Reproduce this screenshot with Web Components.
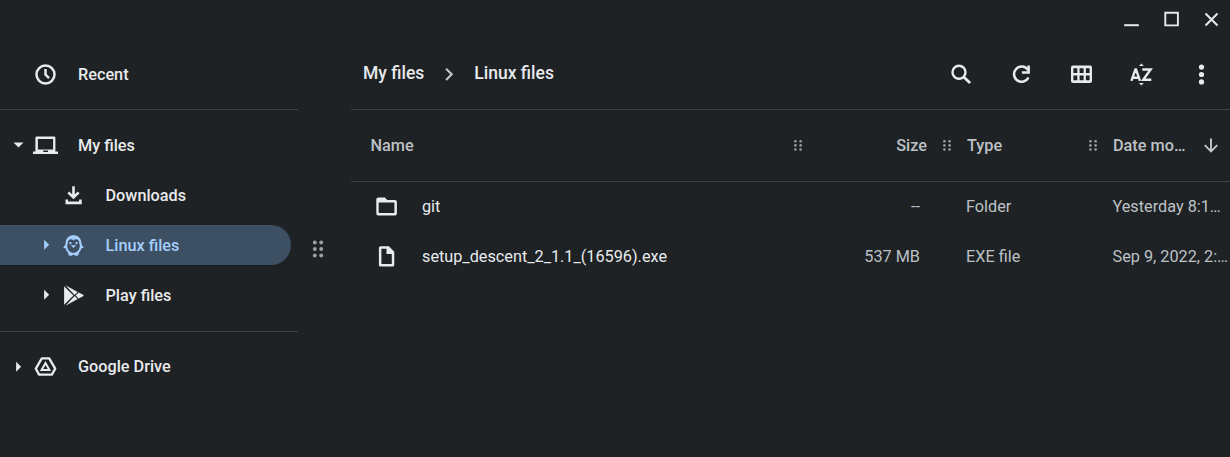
<!DOCTYPE html>
<html lang="en">
<head>
<meta charset="utf-8">
<title>Files</title>
<style>
html,body{margin:0;height:100%;background:#1e2224;overflow:hidden}
</style>
</head>
<body>
<files-app></files-app>
<script>
const define=(name,html,setup)=>customElements.define(name,class extends HTMLElement{
  connectedCallback(){
    if(this.shadowRoot)return;
    const root=this.attachShadow({mode:'open'});
    const t=document.createElement('template');
    t.innerHTML=html;
    root.append(t.content.cloneNode(true));
    if(setup)setup(this,root);
  }
});

/* All glyphs live on a 26 x 26 grid */
const ICONS={
clock:'<circle cx="13" cy="13" r="9" fill="none" stroke="currentColor" stroke-width="2.500"/><path d="M13 7.600v5.500l3.500 3.500" fill="none" stroke="currentColor" stroke-width="2.500"/>',
laptop:'<path fill-rule="evenodd" d="M4.3 4h17.4c.7 0 1.2.5 1.2 1.2V19H25.500v2.600H.5V19H2.900V5.200C2.900 4.500 3.500 4 4.300 4zM5.400 6.400V17h15.200V6.400zM10.700 18.100v1.300h4.800v-1.300z"/>',
download:'<path d="M13 3.800v10.200M7.800 9.800l5.200 5.200 5.200-5.200M6.300 17v3.400h13.600V17" fill="none" stroke="currentColor" stroke-width="2.600"/>',
penguin:'<path fill-rule="evenodd" d="M13 2.800c4.200 0 7.200 2.600 7.700 6.500l.5 2.900 2 2.900c-.5.700-1.300.9-2.200.5-.5 2.100-1.500 3.600-2.800 4.900.5 1.800-.5 2.800-2.500 2.800-1.100 0-1.700-.4-2.100-1.100h-1.200c-.4.700-1 1.100-2.100 1.100-2 0-3-1-2.500-2.800-1.300-1.300-2.300-2.800-2.800-4.900-.9.400-1.700.2-2.200-.5l2-2.900.5-2.900C5.800 5.400 8.800 2.800 13 2.800zM13 8.200c-1.300-2-5.200-2.100-5.600 1.500-.1 1-.7 2-.7 3.300 0 4.300 2.600 7.300 6.300 7.300s6.300-3 6.300-7.300c0-1.300-.6-2.300-.7-3.300C18.200 6.100 14.300 6.200 13 8.200z"/><circle cx="9.900" cy="10.600" r="1.200"/><circle cx="16.100" cy="10.600" r="1.200"/><path d="M10.300 12.800h5.400L13 15.600z"/>',
play:'<path d="M3.600 3.800L13 13 3.600 22.200zM5 2.700l12.200 6.800-3.100 3zM5 23.300l12.200-6.800-3.100-3zM18.200 10l4.400 2.300q1.200.7 0 1.400L18.200 16 15.100 13z"/>',
drive:'<path d="M9.300 4.800h7.400l6 10.200-3.300 6H6.600L3.300 15z" fill="none" stroke="currentColor" stroke-width="2.300" stroke-linejoin="round"/><path d="M13 9.500l3.900 6.800H9.100z" fill="none" stroke="currentColor" stroke-width="2"/>',
down:'<path d="M8 10.500h10L13 15.500z"/>',
right:'<path d="M10.800 8v10l5-5z"/>',
chevron:'<path d="M9.600 7.200l5.600 5.600-5.600 5.600" fill="none" stroke="currentColor" stroke-width="2.100"/>',
search:'<circle cx="10.500" cy="11" r="6.500" fill="none" stroke="currentColor" stroke-width="2.400"/><path d="M15.200 15.600l6.400 6.200" stroke="currentColor" stroke-width="2.800"/>',
refresh:'<path d="M19.300 8.200A7.600 7.600 0 1 0 20 16" fill="none" stroke="currentColor" stroke-width="2.500"/><path d="M18.800 4.100h2.600v8.200h-8V9.800h5.400z"/>',
grid:'<path fill-rule="evenodd" d="M4.500 4h17q2 0 2 2v13.500q0 2-2 2h-17q-2 0-2-2V6q0-2 2-2zM4.900 6.700v4.800h3.900V6.700zm6.200 0v4.800h4V6.700zm6.300 0v4.800h3.700V6.700zM4.900 13.900v4.900h3.900v-4.900zm6.200 0v4.900h4v-4.900zm6.300 0v4.900h3.700v-4.900z"/>',
sort:'<path d="M10.500 4.400h4.800L12.900 2zM10.500 21.600h4.800l-2.400 2.400z"/><path d="M2.900 19.300L6.900 7.900h.6l4 11.400M4.700 16.300h5.200M13.800 8h8.300l-7.400 10.200h8.100" fill="none" stroke="currentColor" stroke-width="2.400"/>',
more:'<circle cx="13" cy="5.600" r="2.600"/><circle cx="13" cy="13" r="2.600"/><circle cx="13" cy="20.400" r="2.600"/>',
folder:'<path fill-rule="evenodd" d="M4.700 4h6.600l2.500 2.600h7.700q1.900 0 1.900 1.900v11.600q0 1.900-1.900 1.900H4.700q-1.900 0-1.900-1.900V5.900Q2.800 4 4.700 4zM5.200 9.100v10.500h15.700V9.100z"/>',
file:'<path fill-rule="evenodd" d="M7 3h8.400l5.400 5.500v13.200q0 1.600-1.600 1.600H7q-1.600 0-1.600-1.600V4.600Q5.400 3 7 3zM7.900 5.500V20.800h10.400V10.700h-5.300V5.500z"/>',
arrow:'<path d="M13 6v12.600M6.800 12.700l6.200 6.200 6.200-6.200" fill="none" stroke="currentColor" stroke-width="1.900"/>',
min:'<path d="M5.700 18.200h14.600v2H5.700z"/>',
max:'<path d="M6.800 6.800h12.600v12.600H6.800z" fill="none" stroke="currentColor" stroke-width="1.900"/>',
close:'<path d="M7 7l12 12M19 7L7 19" stroke="currentColor" stroke-width="2"/>',
grip:[8.900,13,17.100].map(y=>`<circle cx="10.400" cy="${y}" r="1.300"/><circle cx="15.600" cy="${y}" r="1.300"/>`).join(''),
handle:[6.500,13,19.500].map(y=>`<circle cx="9.800" cy="${y}" r="1.950"/><circle cx="16.200" cy="${y}" r="1.950"/>`).join('')
};
define('ui-icon','<style>:host{display:block;flex:none;width:26px;height:26px}svg{display:block;overflow:visible}</style><svg width="26" height="26" viewBox="0 0 26 26" fill="currentColor"></svg>',
 (el,root)=>{
  const svg=root.querySelector('svg');
  svg.innerHTML=ICONS[el.getAttribute('name')]||'';
  /* optional sub-pixel optical alignment: "dx dy" */
  const [dx,dy]=(el.getAttribute('nudge')||'0 0').split(' ').map(Number);
  svg.setAttribute('viewBox',`${-dx} ${-dy} 26 26`);
 });

define('nav-item',`<style>
:host{display:block;height:50px;padding:5px 0;box-sizing:border-box;color:#e8eaed}
.row{display:flex;align-items:center;height:40px;width:291px;box-sizing:border-box;padding-left:5px;border-radius:0 20px 20px 0;font-weight:500}
:host([nested]) .row{padding-left:33px}
:host([selected]) .row{background:#3c4f63;color:#a4cefb}
.label{margin-left:20px;padding-top:var(--label-drop,2px);white-space:nowrap}
:host([nested]) .label{margin-left:19.500px}
</style><div class="row"><slot name="twisty"></slot><slot name="icon"></slot><span class="label"><slot></slot></span></div>`,
 (el)=>{
  const add=(slot,name,nudge)=>{
    const i=document.createElement('ui-icon');
    i.slot=slot;i.setAttribute('name',name);i.setAttribute('nudge',nudge);
    if(slot==='icon')i.style.marginLeft='1px';
    el.append(i);
  };
  add('twisty',el.getAttribute('twisty')||'none',el.getAttribute('twisty')==='right'?'0.3 -0.3':'0.5 0');
  add('icon',el.getAttribute('icon'),el.getAttribute('nudge')||'0.5 0.5');
 });

define('nav-group',`<style>:host{display:block;padding:10px 0 11px;border-top:1px solid #3f4245}</style><slot></slot>`);

define('file-nav',`<style>
:host{display:block;width:298px;flex:none;padding-top:49px;box-sizing:border-box}
.first{padding-bottom:10px}
.last{--label-drop:0px}
</style>
<div class="first"><nav-item icon="clock">Recent</nav-item></div>
<nav-group><nav-item icon="laptop" twisty="down">My files</nav-item>
<nav-item nested icon="download">Downloads</nav-item>
<nav-item nested selected icon="penguin" twisty="right">Linux files</nav-item>
<nav-item nested icon="play" twisty="right">Play files</nav-item></nav-group>
<nav-group class="last"><nav-item icon="drive" twisty="right" nudge="0.5 -0.4">Google Drive</nav-item></nav-group>`);

define('window-controls',`<style>:host{display:flex;justify-content:flex-end;gap:14px;padding:6px 6px 0 0;color:#e8eaed}</style>
<ui-icon name="min" nudge="0.5 0"></ui-icon><ui-icon name="max" nudge="0.5 0"></ui-icon><ui-icon name="close" nudge="0.5 0.5"></ui-icon>`);

define('files-toolbar',`<style>
:host{display:flex;align-items:center;height:70px;padding:0 16px 0 12px;color:#e8eaed;border-bottom:1px solid #3f4245}
.crumbs{display:flex;align-items:center;flex:1;font-size:17.500px;font-weight:500;padding-bottom:2px}
.crumbs ui-icon{color:#c3c6ca;margin:2px 12px 0 12px}
.tools{display:flex;gap:34px}
</style><div class="crumbs"><span>My files</span><ui-icon name="chevron" nudge="0.5 0.5"></ui-icon><span>Linux files</span></div>
<div class="tools"><ui-icon name="search" nudge="0.5 0.3"></ui-icon><ui-icon name="refresh" nudge="0.5 0.5"></ui-icon><ui-icon name="grid" nudge="0.5 0.5"></ui-icon><ui-icon name="sort" nudge="0.5 0.5"></ui-icon><ui-icon name="more" nudge="0.5 0.5"></ui-icon></div>`);

const COLS='grid-template-columns:434px 149px 146px 150px;';
define('list-header',`<style>
:host{display:grid;${COLS}align-items:center;height:71px;border-bottom:1px solid #3f4245;color:#bdc1c6;font-weight:500}
div{display:flex;align-items:center;white-space:nowrap}
.grip{color:#9aa0a6;margin-right:-26px}
.name{padding-left:19.500px;justify-content:space-between}
.size{justify-content:flex-end}.size span{margin-right:7px}
.type{padding-left:33px;justify-content:space-between}
.date{padding-left:33px}
.date ui-icon{margin-left:13px;color:#c4c7cb}
</style>
<div class="name"><span>Name</span><ui-icon class="grip" name="grip" nudge="0 -0.6"></ui-icon></div>
<div class="size"><span>Size</span><ui-icon class="grip" name="grip" nudge="0 -0.6"></ui-icon></div>
<div class="type"><span>Type</span><ui-icon class="grip" name="grip" nudge="0 -0.6"></ui-icon></div>
<div class="date"><span>Date mo…</span><ui-icon name="arrow" nudge="0 -0.5"></ui-icon></div>`);

define('file-row',`<style>
:host{display:grid;${COLS}align-items:center;height:50px;color:#bdc1c6;white-space:nowrap}
.name{display:flex;align-items:center;padding-left:22px;color:#e8eaed}
.name span{margin-left:23px;letter-spacing:-.010px}
.size{text-align:right;padding-right:14px}
.type{padding-left:32px}.date{padding-left:32.500px}
</style>
<div class="name"><slot name="icon"></slot><span><slot name="name"></slot></span></div>
<div class="size"><slot name="size"></slot></div><div class="type"><slot name="type"></slot></div><div class="date"><slot name="date"></slot></div>`);

define('files-app',`<style>
:host{display:flex;height:457px;width:1230px;overflow:hidden;background:#1e2224;font:16.250px/24px Roboto,sans-serif}
.split{flex:none;width:53px;box-sizing:border-box;padding:236px 0 0 7px;color:#9aa0a6}
main{width:879px;flex:none}
window-controls{box-sizing:border-box;height:39px}
</style>
<file-nav></file-nav>
<div class="split"><ui-icon name="handle"></ui-icon></div>
<main><window-controls></window-controls><files-toolbar></files-toolbar><list-header></list-header>
<file-row><ui-icon slot="icon" name="folder" nudge="0.5 -0.5"></ui-icon><span slot="name">git</span><span slot="size">--</span><span slot="type">Folder</span><span slot="date">Yesterday 8:1…</span></file-row>
<file-row><ui-icon slot="icon" name="file" nudge="0.5 -0.7"></ui-icon><span slot="name">setup_descent_2_1.1_(16596).exe</span><span slot="size">537 MB</span><span slot="type">EXE file</span><span slot="date">Sep 9, 2022, 2:…</span></file-row>
</main>`);
</script>
</body>
</html>
